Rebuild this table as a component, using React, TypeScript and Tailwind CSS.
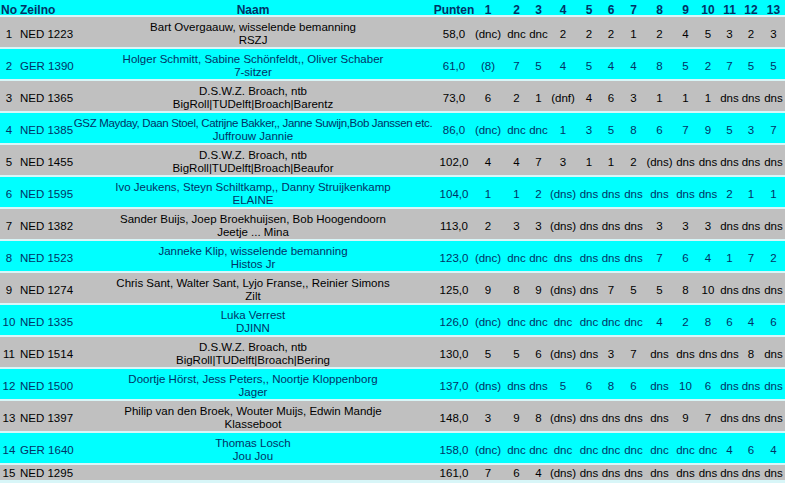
import React from 'react';

type Row = {
    no: number;
    sail: string;
    crew: string;
    boat: string;
    points: string;
    races: string[];
};

const rows: Row[] = [
    { no: 1, sail: 'NED 1223', crew: 'Bart Overgaauw, wisselende bemanning', boat: 'RSZJ', points: '58,0', races: ['(dnc)', 'dnc', 'dnc', '2', '2', '2', '1', '2', '4', '5', '3', '2', '3'] },
    { no: 2, sail: 'GER 1390', crew: 'Holger Schmitt, Sabine Schönfeldt,, Oliver Schaber', boat: '7-sitzer', points: '61,0', races: ['(8)', '7', '5', '4', '5', '4', '4', '8', '5', '2', '7', '5', '5'] },
    { no: 3, sail: 'NED 1365', crew: 'D.S.W.Z. Broach, ntb', boat: 'BigRoll|TUDelft|Broach|Barentz', points: '73,0', races: ['6', '2', '1', '(dnf)', '4', '6', '3', '1', '1', '1', 'dns', 'dns', 'dns'] },
    { no: 4, sail: 'NED 1385', crew: 'GSZ Mayday, Daan Stoel, Catrijne Bakker,, Janne Suwijn,Bob Janssen etc.', boat: 'Juffrouw Jannie', points: '86,0', races: ['(dnc)', 'dnc', 'dnc', '1', '3', '5', '8', '6', '7', '9', '5', '3', '7'] },
    { no: 5, sail: 'NED 1455', crew: 'D.S.W.Z. Broach, ntb', boat: 'BigRoll|TUDelft|Broach|Beaufor', points: '102,0', races: ['4', '4', '7', '3', '1', '1', '2', '(dns)', 'dns', 'dns', 'dns', 'dns', 'dns'] },
    { no: 6, sail: 'NED 1595', crew: 'Ivo Jeukens, Steyn Schiltkamp,, Danny Struijkenkamp', boat: 'ELAINE', points: '104,0', races: ['1', '1', '2', '(dns)', 'dns', 'dns', 'dns', 'dns', 'dns', 'dns', '2', '1', '1'] },
    { no: 7, sail: 'NED 1382', crew: 'Sander Buijs, Joep Broekhuijsen, Bob Hoogendoorn', boat: 'Jeetje ... Mina', points: '113,0', races: ['2', '3', '3', '(dns)', 'dns', 'dns', 'dns', '3', '3', '3', 'dns', 'dns', 'dns'] },
    { no: 8, sail: 'NED 1523', crew: 'Janneke Klip, wisselende bemanning', boat: 'Histos Jr', points: '123,0', races: ['(dnc)', 'dnc', 'dnc', 'dns', 'dns', 'dns', 'dns', '7', '6', '4', '1', '7', '2'] },
    { no: 9, sail: 'NED 1274', crew: 'Chris Sant, Walter Sant, Lyjo Franse,, Reinier Simons', boat: 'Zilt', points: '125,0', races: ['9', '8', '9', '(dns)', 'dns', '7', '5', '5', '8', '10', 'dns', 'dns', 'dns'] },
    { no: 10, sail: 'NED 1335', crew: 'Luka Verrest', boat: 'DJINN', points: '126,0', races: ['(dnc)', 'dnc', 'dnc', 'dnc', 'dnc', 'dnc', 'dnc', '4', '2', '8', '6', '4', '6'] },
    { no: 11, sail: 'NED 1514', crew: 'D.S.W.Z. Broach, ntb', boat: 'BigRoll|TUDelft|Broach|Bering', points: '130,0', races: ['5', '5', '6', '(dns)', 'dns', '3', '7', 'dns', 'dns', 'dns', 'dns', '8', 'dns'] },
    { no: 12, sail: 'NED 1500', crew: 'Doortje Hörst, Jess Peters,, Noortje Kloppenborg', boat: 'Jager', points: '137,0', races: ['(dns)', 'dns', 'dns', '5', '6', '8', '6', 'dns', '10', '6', 'dns', 'dns', 'dns'] },
    { no: 13, sail: 'NED 1397', crew: 'Philip van den Broek, Wouter Muijs, Edwin Mandje', boat: 'Klasseboot', points: '148,0', races: ['3', '9', '8', '(dns)', 'dns', 'dns', 'dns', 'dns', '9', '7', 'dns', 'dns', 'dns'] },
    { no: 14, sail: 'GER 1640', crew: 'Thomas Losch', boat: 'Jou Jou', points: '158,0', races: ['(dnc)', 'dnc', 'dnc', 'dnc', 'dnc', 'dnc', 'dnc', 'dnc', 'dnc', 'dnc', '4', '6', '4'] },
    { no: 15, sail: 'NED 1295', crew: '', boat: '', points: '161,0', races: ['7', '6', '4', '(dns)', 'dns', 'dns', 'dns', 'dns', 'dns', 'dns', 'dns', 'dns', 'dns'] },
];

// column widths measured off the screenshot
const cols = 'grid grid-cols-[18px_52px_366px_36px_32px_25px_19px_30px_22px_22px_23px_29px_23px_22px_21px_22px_23px]';

const Cell = ({ children, left, flat }: { children: React.ReactNode; left?: boolean; flat?: boolean }) => (
    <div className={`flex items-center whitespace-nowrap ${left ? 'pl-[2px]' : 'justify-center'} ${flat ? 'pt-[1px]' : 'pt-[3px]'}`}>
        {children}
    </div>
);

export default function App() {
    return (
        <div className="w-[785px] h-[483px] overflow-hidden bg-[#d8f6f8] font-['Liberation_Sans',Arial,sans-serif] text-[11.5px] leading-[14px]">
            {/* header */}
            <div className={`${cols} h-[15px] bg-[#00ffff] text-[#003366] font-bold text-[12px]`}>
                <Cell>No</Cell>
                <Cell left>Zeilno</Cell>
                <Cell>Naam</Cell>
                <Cell>Punten</Cell>
                {Array.from({ length: 13 }, (_, i) => (
                    <Cell key={i}>{i + 1}</Cell>
                ))}
            </div>

            {rows.map((r) => {
                const cyan = r.no % 2 === 0;
                const long = r.crew.length > 60;
                const flat = !r.crew;
                return (
                    <div
                        key={r.no}
                        className={`${cols} mt-[2px] ${flat ? 'h-[15px]' : 'h-[30px]'} ${cyan ? 'bg-[#00ffff] text-[#003366]' : 'bg-[#c0c0c0] text-black'}`}
                    >
                        <Cell flat={flat}>{r.no}</Cell>
                        <Cell left flat={flat}>{r.sail}</Cell>
                        <div className="flex flex-col items-center justify-center pt-[3px] whitespace-nowrap text-center leading-[13px]">
                            <span className={long ? 'tracking-[-0.35px]' : ''}>{r.crew}</span>
                            <span>{r.boat}</span>
                        </div>
                        <Cell flat={flat}>{r.points}</Cell>
                        {r.races.map((v, i) => (
                            <Cell key={i} flat={flat}>{v}</Cell>
                        ))}
                    </div>
                );
            })}
        </div>
    );
}
